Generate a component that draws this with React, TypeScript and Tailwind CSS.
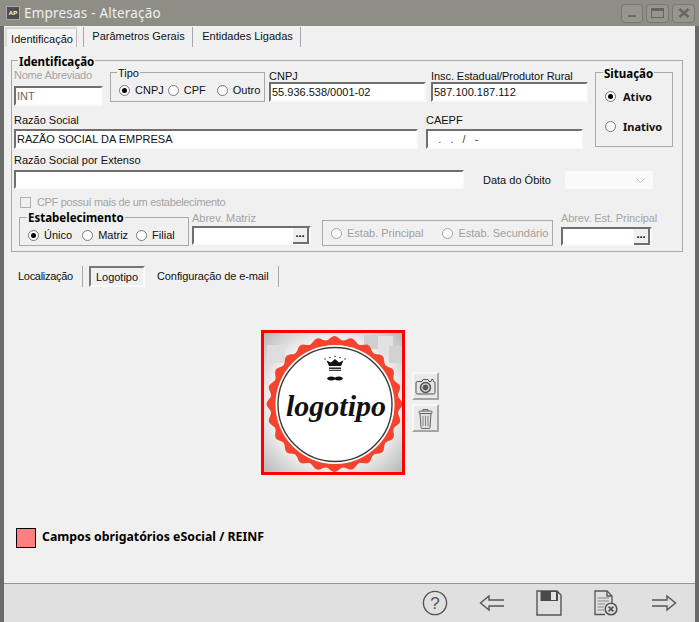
import React from "react";

const font = { fontFamily: '"Liberation Sans", Tahoma, sans-serif' };
const boldFont = { fontFamily: '"Noto Sans", Tahoma, sans-serif' };

function Input({ value, className = "", children }: { value?: string; className?: string; children?: React.ReactNode }) {
  return (
    <div className={"flex items-center shrink-0 bg-white border-2 border-t-[#6f6f6f] border-l-[#6f6f6f] border-r-[#fafafa] border-b-[#fafafa] pl-px text-[11px] leading-none text-[#111] " + className}>
      <span className="grow whitespace-pre">{value}</span>
      {children}
    </div>
  );
}

function Radio({ on, label, bold, dim, gap = "gap-[5px]", className = "" }: { on?: boolean; label: string; bold?: boolean; dim?: boolean; gap?: string; className?: string }) {
  return (
    <div className={"flex items-center whitespace-nowrap " + gap + " " + className}>
      <span className={"flex items-center justify-center size-[11px] rounded-full border bg-white shrink-0 " + (dim ? "border-[#a0a0a0] bg-[#f0f0f0]" : "border-[#777]")}>
        {on && <span className="size-[5px] rounded-full bg-black" />}
      </span>
      <span style={bold ? boldFont : undefined} className={(bold ? "font-bold " : "") + (dim ? "text-[#a0a0a0]" : "text-[#111]")}>{label}</span>
    </div>
  );
}

function Ellipsis() {
  return (
    <span className="flex items-center justify-center w-[16px] h-[16px] shrink-0 bg-[#f0f0f0] border-r-2 border-b-2 border-r-[#6f6f6f] border-b-[#6f6f6f] font-bold text-[11px] leading-none text-black pb-[3px]">
      ...
    </span>
  );
}

const scallop = (() => {
  const cx = 70.5, cy = 71, n = 24;
  const pts: string[] = [];
  for (let i = 0; i <= 360; i++) {
    const a = (i * Math.PI) / 180;
    const r = 66 + 1.9 * Math.cos(n * a);
    pts.push(`${(cx + r * Math.sin(a)).toFixed(2)},${(cy - r * Math.cos(a)).toFixed(2)}`);
  }
  return "M" + pts.join("L") + "Z";
})();

function Logo() {
  return (
    <svg viewBox="0 0 138 139" className="size-full block">
      <defs>
        <radialGradient id="bg" cx="50%" cy="50%" r="72%">
          <stop offset="55%" stopColor="#ffffff" />
          <stop offset="100%" stopColor="#b4b4b4" />
        </radialGradient>
      </defs>
      <rect width="138" height="139" fill="url(#bg)" />
      <rect x="3" y="12" width="18" height="18" fill="#dedede" />
      <rect x="100" y="2" width="14" height="14" fill="#cfcfcf" />
      <rect x="114" y="3" width="15" height="17" fill="#e2e2e2" />
      <rect x="125" y="13" width="13" height="17" fill="#d2d2d2" />
      <path d={scallop} fill="#f4442e" />
      <circle cx="71" cy="71.5" r="59.5" fill="#fff" />
      <circle cx="71" cy="71.5" r="57" fill="none" stroke="#3a3a3a" strokeWidth="1.4" />
      <path d="M62.5 27.5 L65 33 H77 L79.5 27.5 L75 29.5 L71 26 L67 29.5 Z" fill="#111" />
      <rect x="65" y="34.5" width="12" height="1.4" fill="#111" />
      <rect x="65" y="36.8" width="12" height="1" fill="#111" />
      <circle cx="61" cy="26" r=".7" fill="#111" /><circle cx="66" cy="24.5" r=".7" fill="#111" />
      <circle cx="71" cy="23.5" r=".7" fill="#111" /><circle cx="76" cy="24.5" r=".7" fill="#111" />
      <circle cx="81" cy="26" r=".7" fill="#111" />
      <path d="M63 46 C64 43 68 43 71 44.5 C74 43 78 43 79 46 C76 48 73 48 71 46.5 C69 48 66 48 63 46 Z" fill="#111" />
      <text x="72" y="83" textAnchor="middle" fontFamily="'Liberation Serif', serif" fontStyle="italic" fontWeight="700" fontSize="30" fill="#111">logotipo</text>
    </svg>
  );
}

function SquareBtn({ children, className = "" }: { children: React.ReactNode; className?: string }) {
  return (
    <div className={"flex items-center justify-center w-[27px] h-[28px] bg-[#e9e9e9] border-2 border-t-[#f8f8f8] border-l-[#f8f8f8] border-r-[#a4a4a4] border-b-[#a4a4a4] " + className}>
      {children}
    </div>
  );
}

const g = "#555";
const legend = "absolute bg-[#f0f0f0] font-bold text-[11.5px] leading-[12px] text-black px-px";

export default function App() {
  return (
    <div style={font} className="relative w-[699px] h-[622px] overflow-hidden flex flex-col bg-[#f0f0f0] text-[11px] leading-[13px] text-[#111]">
      {/* Title bar */}
      <div className="flex items-center h-[26px] shrink-0 bg-[#8e8e86] pl-[6px] pr-[4px]">
        <span className="flex items-center justify-center size-[14px] bg-[#4d4d4d] border border-[#aaa] text-[6px] font-bold text-white">AP</span>
        <span style={boldFont} className="ml-[4px] text-[13.5px] text-[#efefef] tracking-[0.2px]">Empresas - Alteração</span>
        <div className="ml-auto flex gap-[3px] items-center">
          <span className="flex items-end justify-center pb-[5px] w-[22px] h-[19px] rounded-[4px] border border-[#787870] bg-[#96968e]"><span className="w-[8px] h-[2px] bg-[#6c6c66]" /></span>
          <span className="flex items-center justify-center w-[23px] h-[19px] rounded-[4px] border border-[#787870] bg-[#96968e]"><span className="w-[13px] h-[10px] border border-[#66665f] border-t-[3px]" /></span>
          <span className="flex items-center justify-center w-[23px] h-[19px] rounded-[4px] border border-[#787870] bg-[#96968e]">
            <svg width="12" height="10" viewBox="0 0 12 10"><path d="M1.5 1 L10.5 9 M10.5 1 L1.5 9" stroke="#66665f" strokeWidth="2.6" /></svg>
          </span>
        </div>
      </div>

      {/* Body */}
      <div className="flex flex-col grow min-h-0 border-l-[4px] border-r-[4px] border-l-[#6a6a6a] border-r-[#6a6a6a]">
        {/* Tabs */}
        <div className="flex items-end h-[21px] shrink-0 pl-[1px]">
          <div className="flex items-center justify-center w-[72px] h-[20px] bg-[#f3f3f3] border-t-2 border-l-2 border-[#d8d8d8] shadow-[inset_-1px_0_0_#bbb]"><span className="pt-[2px]">Identificação</span></div>
          <div className="flex items-center justify-center w-[110px] h-[20px] border-x border-[#a8a8a8] ml-[6px] pb-[2px] pl-[1px]">Parâmetros Gerais</div>
          <div className="flex items-center justify-center w-[108px] h-[20px] border-r border-[#a8a8a8] pb-[2px] pl-[2px]">Entidades Ligadas</div>
        </div>

        {/* Group box */}
        <div className="relative ml-[7px] mt-[13px] w-[672px] h-[192px] shrink-0 border border-[#a9a9a9] pl-[2px] pt-[8px]">
          <span style={boldFont} className={legend + " left-[6px] top-[-5px]"}>Identificação</span>

          <div className="flex items-start h-[80px]">
            <div className="flex flex-col w-[89px] shrink-0">
              <span className="text-[#a4a4a4] h-[17px] whitespace-nowrap tracking-[-0.25px]">Nome Abreviado</span>
              <Input value="INT" className="w-[89px] h-[20px] text-[#666]" />
            </div>
            <div className="relative ml-[7px] mt-[3px] w-[155px] h-[30px] shrink-0 border border-[#a9a9a9] flex items-center pl-[8px]">
              <span className="absolute left-[6px] top-[-5px] bg-[#f0f0f0] leading-[11px] px-px">Tipo</span>
              <div className="flex items-center pt-[8px] pb-[2px]">
                <Radio on label="CNPJ" />
                <Radio label="CPF" className="ml-[4px]" />
                <Radio label="Outro" className="ml-[11px]" />
              </div>
            </div>
            <div className="flex flex-col ml-[4px] w-[157px] shrink-0">
              <span className="h-[14px] pt-[1px]">CNPJ</span>
              <Input value="55.936.538/0001-02" className="h-[20px] w-[157px] -mt-[1px]" />
            </div>
            <div className="flex flex-col ml-[5px] w-[157px] shrink-0">
              <span className="h-[14px] pt-[1px] whitespace-nowrap tracking-[-0.07px]">Insc. Estadual/Produtor Rural</span>
              <Input value="587.100.187.112" className="h-[20px] w-[157px] -mt-[1px]" />
            </div>
            <div className="relative ml-[7px] mt-[3px] w-[78px] h-[75px] shrink-0 border border-[#a9a9a9] flex flex-col pl-[9px] pt-[17px] gap-[17px]">
              <span style={boldFont} className={legend + " left-[7px] top-[-5px]"}>Situação</span>
              <Radio on bold label="Ativo" gap="gap-[7px]" />
              <Radio bold label="Inativo" gap="gap-[7px]" />
            </div>
          </div>

          <div className="flex items-start -mt-[36px] w-[580px]">
            <div className="flex flex-col w-[404px] shrink-0">
              <span className="h-[16px] pt-[1px]">Razão Social</span>
              <Input value="RAZÃO SOCIAL DA EMPRESA" className="w-[404px] h-[20px]" />
            </div>
            <div className="flex flex-col ml-[8px] w-[157px] shrink-0">
              <span className="h-[16px] pt-[1px]">CAEPF</span>
              <Input value="   .   .   /   -" className="w-[157px] h-[20px] text-[#444]" />
            </div>
          </div>

          <div className="flex items-start mt-[5px]">
            <div className="flex flex-col w-[450px] shrink-0">
              <span className="h-[16px]">Razão Social por Extenso</span>
              <Input className="w-[450px] h-[19px]" />
            </div>
            <span className="ml-[19px] mt-[20px] whitespace-nowrap">Data do Óbito</span>
            <div className="ml-[14px] mt-[17px] w-[88px] h-[18px] bg-[#fafafa] flex items-center justify-end pr-[8px]">
              <svg width="9" height="5" viewBox="0 0 9 5"><path d="M0.5 0.5 L4.5 4.5 L8.5 0.5" fill="none" stroke="#b8b8b8" /></svg>
            </div>
          </div>

          <div className="flex items-center mt-[7px] ml-[6px] h-[13px] text-[#a4a4a4] tracking-[-0.33px]">
            <span className="size-[11px] border border-[#b0b0b0] mr-[6px]" />
            CPF possuí mais de um estabelecimento
          </div>

          <div className="flex items-start mt-[3px]">
            <div className="relative ml-[5px] mt-[5px] w-[170px] h-[29px] shrink-0 border border-[#a9a9a9] flex items-center pl-[8px] pt-[7px]">
              <span style={boldFont} className={legend + " left-[7px] top-[-6px]"}>Estabelecimento</span>
              <Radio on label="Único" />
              <Radio label="Matriz" className="ml-[10px]" />
              <Radio label="Filial" className="ml-[8px]" />
            </div>
            <div className="flex flex-col ml-[3px] w-[119px] shrink-0">
              <span className="h-[14px] text-[#a4a4a4]">Abrev. Matriz</span>
              <Input className="w-[119px] h-[19px]"><Ellipsis /></Input>
            </div>
            <div className="ml-[11px] mt-[8px] w-[231px] h-[26px] shrink-0 border border-[#a9a9a9] flex items-center pl-[8px]">
              <Radio dim label="Estab. Principal" gap="gap-[5px]" />
              <Radio dim label="Estab. Secundário" gap="gap-[5px]" className="ml-[19px]" />
            </div>
            <div className="flex flex-col ml-[8px] w-[91px] shrink-0">
              <span className="h-[15px] text-[#a4a4a4] whitespace-nowrap tracking-[-0.1px]">Abrev. Est. Principal</span>
              <Input className="w-[91px] h-[19px]"><Ellipsis /></Input>
            </div>
          </div>
        </div>

        {/* Sub tabs */}
        <div className="flex items-center h-[21px] mt-[14px] shrink-0">
          <div className="flex items-center w-[79px] h-full pl-[14px] border-r border-[#a8a8a8] tracking-[-0.3px]">Localização</div>
          <div className="flex items-center justify-center ml-[6px] w-[56px] h-full border-2 border-t-[#777] border-l-[#777] border-r-[#fafafa] border-b-[#fafafa] pt-[1px]">Logotipo</div>
          <div className="flex items-center w-[134px] h-full pl-[12px] border-r border-[#a8a8a8] whitespace-nowrap tracking-[-0.1px]">Configuração de e-mail</div>
        </div>

        {/* Logo */}
        <div className="flex items-start ml-[257px] mt-[43px] shrink-0">
          <div className="w-[144px] h-[145px] border-[3px] border-[#f00] shrink-0"><Logo /></div>
          <div className="flex flex-col gap-[4px] ml-[7px] mt-[42px]">
            <SquareBtn>
              <svg width="21" height="19" viewBox="0 0 21 19" fill="none" stroke={g}>
                <path d="M2.5 4.5 H7 L8 2.5 H13 L14 4.5 H16 L16.5 2.5 H18 L18.5 4.5 Q20 4.5 20 6 V15.5 Q20 17 18.5 17 H2.5 Q1 17 1 15.5 V6 Q1 4.5 2.5 4.5 Z" fill="#e4e4e4" />
                <circle cx="10.5" cy="10.5" r="5" strokeWidth="1.5" fill="#d0d0d0" />
                <circle cx="10.5" cy="10.5" r="2.4" fill="#555" />
              </svg>
            </SquareBtn>
            <SquareBtn>
              <svg width="15" height="21" viewBox="0 0 15 21" fill="#ddd" stroke="#666">
                <path d="M5 3 V1.5 H10 V3" fill="none" />
                <rect x="1" y="3" width="13" height="2.5" rx="1" />
                <path d="M2 5.5 L3 19.5 Q3 20.5 4 20.5 H11 Q12 20.5 12 19.5 L13 5.5 Z" />
                <path d="M5 8 V18 M7.5 8 V18 M10 8 V18" stroke="#888" fill="none" />
              </svg>
            </SquareBtn>
          </div>
        </div>

        {/* Legend */}
        <div className="flex items-center ml-[12px] mt-[53px] shrink-0">
          <span className="size-[20px] bg-[#ff8080] border border-black shrink-0" />
          <span style={boldFont} className="ml-[6px] font-bold text-[12.3px] text-black -mt-[3px]">Campos obrigatórios eSocial / REINF</span>
        </div>

        {/* Footer */}
        <div className="flex items-center grow mt-[35px] border-t border-t-[#979797] bg-[#e0e0e0] pl-[418px]">
          <svg width="26" height="26" viewBox="0 0 26 26" fill="none" stroke={g} strokeWidth="1.4">
            <circle cx="13" cy="13" r="11.6" />
            <text x="13" y="19" textAnchor="middle" fontSize="17" fontFamily="'Liberation Sans', sans-serif" fill={g} stroke="none">?</text>
          </svg>
          <svg width="26" height="18" viewBox="0 0 26 18" fill="none" stroke={g} strokeWidth="1.4" className="ml-[31px]">
            <path d="M25 6 H10 V2 L1.5 9 L10 16 V12 H25" />
          </svg>
          <svg width="26" height="26" viewBox="0 0 26 26" fill="none" className="ml-[31px]">
            <path d="M1 1 H21 L25 5 V25 H1 Z" stroke={g} strokeWidth="1.4" />
            <path d="M4.5 1 H22 V11 H4.5 Z" fill="#4a4a4a" />
            <rect x="15" y="2" width="5" height="8" fill="#e4e4e4" />
          </svg>
          <svg width="24" height="26" viewBox="0 0 24 26" fill="none" stroke={g} className="ml-[32px]">
            <path d="M11 24.5 H1 V1 H13 L18 6 V14" strokeWidth="1.3" />
            <path d="M13 1 V6 H18" strokeWidth="1.3" />
            <path d="M3.5 8 H15 M3.5 11 H15 M3.5 14 H11 M3.5 17 H10 M3.5 20 H10" stroke="#888" />
            <circle cx="17" cy="19" r="5.8" strokeWidth="1.6" fill="#e0e0e0" />
            <path d="M14.6 16.6 L19.4 21.4 M19.4 16.6 L14.6 21.4" strokeWidth="1.8" />
          </svg>
          <svg width="26" height="18" viewBox="0 0 26 18" fill="none" stroke={g} strokeWidth="1.4" className="ml-[33px]">
            <path d="M1 6 H16 V2 L24.5 9 L16 16 V12 H1" />
          </svg>
        </div>
      </div>
    </div>
  );
}
